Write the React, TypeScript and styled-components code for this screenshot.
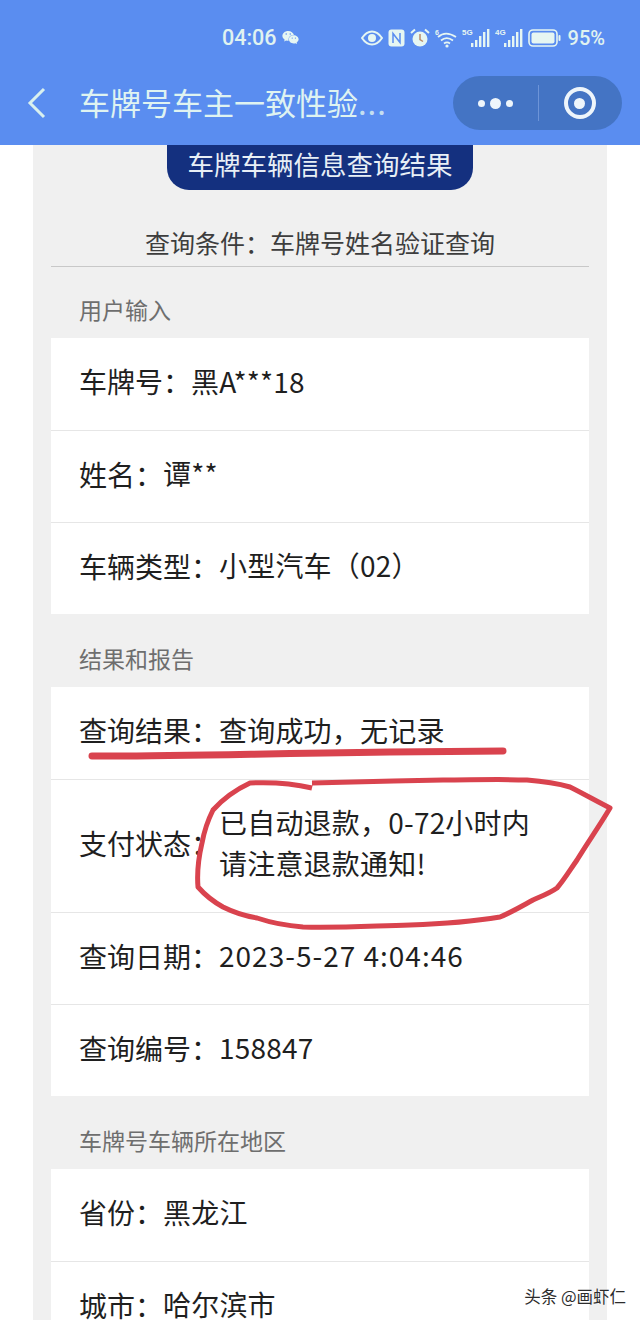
import React from 'react';
import { FaWeixin } from 'react-icons/fa';
import styled, { createGlobalStyle } from 'styled-components';

const GlobalStyle = createGlobalStyle`
  html, body {
    margin: 0;
    padding: 0;
    background: #fff;
  }
  body {
    font-family: "Liberation Sans", "Noto Sans CJK SC", sans-serif;
  }
`;

// full-width punctuation
const COLON = '\uFF1A';
const COMMA = '\uFF0C';
const OPEN = '\uFF08';
const CLOSE = '\uFF09';

interface RowData {
  label: string;
  value: React.ReactNode;
  tall?: boolean;
  spaced?: boolean;
}

interface SectionData {
  title: string;
  rows: RowData[];
}

const sections: SectionData[] = [
  {
    title: '用户输入',
    rows: [
      { label: `车牌号${COLON}`, value: '黑A***18' },
      { label: `姓名${COLON}`, value: '谭**' },
      { label: `车辆类型${COLON}`, value: `小型汽车${OPEN}02${CLOSE}` },
    ],
  },
  {
    title: '结果和报告',
    rows: [
      { label: `查询结果${COLON}`, value: `查询成功${COMMA}无记录` },
      {
        label: `支付状态${COLON}`,
        value: (
          <>
            已自动退款{COMMA}0-72小时内
            <br />
            请注意退款通知!
          </>
        ),
        tall: true,
      },
      { label: `查询日期${COLON}`, value: '2023-5-27 4:04:46', spaced: true },
      { label: `查询编号${COLON}`, value: '158847' },
    ],
  },
  {
    title: '车牌号车辆所在地区',
    rows: [
      { label: `省份${COLON}`, value: '黑龙江' },
      { label: `城市${COLON}`, value: '哈尔滨市' },
    ],
  },
];

const SignalIcon = ({ tag }: { tag: string }) => (
  <svg width="28" height="22" viewBox="0 0 28 22">
    <text x="0" y="8" fontSize="8" fontWeight="700" fill="#e6f6f2" fontFamily="Liberation Sans">
      {tag}
    </text>
    <g fill="#e6f6f2">
      <rect x="9" y="16" width="2.4" height="4" />
      <rect x="13" y="13" width="2.4" height="7" />
      <rect x="17" y="9" width="2.4" height="11" />
      <rect x="21" y="5" width="2.4" height="15" />
      <rect x="25" y="2" width="2.4" height="18" />
    </g>
  </svg>
);

const StatusIcons = () => (
  <IconRow>
    <svg width="22" height="16" viewBox="0 0 22 16">
      <path d="M1 8c3-4.500 6.500-6.500 10-6.500S18 3.500 21 8c-3 4.500-6.500 6.500-10 6.500S4 12.500 1 8z" fill="none" stroke="#e6f6f2" strokeWidth="2" />
      <circle cx="11" cy="8" r="4" fill="#e6f6f2" />
    </svg>
    <svg width="17" height="18" viewBox="0 0 17 18">
      <rect x="0.500" y="0.500" width="16" height="17" rx="3" fill="#e6f6f2" />
      <path d="M5 14V4.500l7 9V4" fill="none" stroke="#5a8df0" strokeWidth="1.500" />
    </svg>
    <svg width="20" height="20" viewBox="0 0 20 20">
      <circle cx="10" cy="11" r="7.500" fill="#e6f6f2" />
      <path d="M10 6v5.500l3 2" fill="none" stroke="#b98b6a" strokeWidth="1.500" />
      <path d="M1 5l4-3.500M19 5l-4-3.500" stroke="#e6f6f2" strokeWidth="2" />
    </svg>
    <svg width="22" height="20" viewBox="0 0 22 20">
      <text x="0" y="7" fontSize="7" fontWeight="700" fill="#e6f6f2" fontFamily="Liberation Sans">6</text>
      <path d="M3 9c5-4.500 11-4.500 18 0M6 12.500c3.500-3 8-3 12 0M9 15.500c2-1.500 4-1.500 6 0" fill="none" stroke="#e6f6f2" strokeWidth="1.800" />
      <circle cx="12" cy="18" r="1.600" fill="#e6f6f2" />
    </svg>
    <SignalIcon tag="5G" />
    <SignalIcon tag="4G" />
    <svg width="33" height="18" viewBox="0 0 33 18">
      <rect x="1" y="1" width="28" height="16" rx="4" fill="none" stroke="#e6f6f2" strokeWidth="1.600" />
      <rect x="3.500" y="3.500" width="23" height="11" rx="2" fill="#e6f6f2" />
      <rect x="30.500" y="6" width="2" height="6" rx="1" fill="#e6f6f2" />
    </svg>
  </IconRow>
);

const App = () => {
  return (
    <Page>
      <GlobalStyle />
      <Header>
        <StatusBar>
          <Clock>04:06</Clock>
          <ChatIcon />
          <StatusRight>
            <StatusIcons />
            <BatteryText>95%</BatteryText>
          </StatusRight>
        </StatusBar>
        <NavBar>
          <BackIcon width="20" height="32" viewBox="0 0 20 32">
            <path d="M17 2L3 16l14 14" fill="none" stroke="#d9f0ee" strokeWidth="3" />
          </BackIcon>
          <NavTitle>
            车牌号车主一致性验<Dots>...</Dots>
          </NavTitle>
          <Capsule>
            <CapsulePart>
              <MoreDots>
                <Dot size={7} />
                <Dot size={11} />
                <Dot size={7} />
              </MoreDots>
            </CapsulePart>
            <CapsulePart>
              <TargetRing />
            </CapsulePart>
          </Capsule>
        </NavBar>
      </Header>

      <Panel>
        <PillWrap>
          <Pill>车牌车辆信息查询结果</Pill>
        </PillWrap>
        <Condition>查询条件{COLON}车牌号姓名验证查询</Condition>
        {sections.map((section) => (
          <section key={section.title}>
            <SectionTitle>{section.title}</SectionTitle>
            <Card>
              {section.rows.map((row) => (
                <Row key={row.label} $tall={row.tall}>
                  <RowLabel>{row.label}</RowLabel>
                  <RowValue $spaced={row.spaced}>{row.value}</RowValue>
                </Row>
              ))}
            </Card>
          </section>
        ))}
      </Panel>

      <Scribble viewBox="0 0 640 1320">
        <path
          d="M92 756C180 757 300 752 503 751"
          fill="none"
          stroke="#d9434e"
          strokeWidth="7"
          strokeLinecap="round"
        />
        <path
          d="M312 788C295 784 270 782 250 783C235 790 222 800 213 810C208 820 204 832 202 843C198 860 197 875 198 887C205 895 214 902 223 907C235 913 245 916 257 918C275 924 290 926 303 927C340 928 370 926 410 925C440 924 470 922 500 917C512 912 522 906 533 900C542 896 550 893 557 888C564 880 570 870 577 860C588 842 600 825 610 808C598 802 584 794 570 787C556 783 540 781 527 780C500 779 470 780 443 780C400 781 350 782 312 783"
          fill="none"
          stroke="#d9434e"
          strokeWidth="5"
          strokeLinejoin="round"
        />
      </Scribble>
      <Watermark>头条 @画虾仁</Watermark>
    </Page>
  );
};

export default App;

const Page = styled.div`
  position: relative;
  width: 640px;
  height: 1320px;
  overflow: hidden;
  background: #fff;
`;

const Header = styled.header`
  height: 145px;
  background: #5a8df0;
  color: #e0f3f0;
`;

const StatusBar = styled.div`
  height: 75px;
  padding: 0 35px 0 222px;
  box-sizing: border-box;
  display: flex;
  align-items: center;
`;

const Clock = styled.span`
  font-size: 21.500px;
  font-weight: 500;
  font-family: Roboto, sans-serif;
`;

const ChatIcon = styled(FaWeixin)`
  margin-left: 5px;
  font-size: 17px;
  color: #e6f6f2;
`;

const StatusRight = styled.div`
  margin-left: auto;
  display: flex;
  align-items: center;
  gap: 7px;
`;

const IconRow = styled.div`
  display: flex;
  align-items: center;
  gap: 5px;
`;

const BatteryText = styled.span`
  font-size: 20px;
  font-weight: 500;
  font-family: Roboto, sans-serif;
`;

const NavBar = styled.div`
  height: 70px;
  padding: 0 18px 0 27px;
  display: flex;
  align-items: flex-start;
`;

const BackIcon = styled.svg`
  flex: none;
  margin-top: 12px;
`;

const NavTitle = styled.h1`
  margin: 6px 0 0 32px;
  font-size: 31px;
  line-height: 42px;
  font-weight: 400;
  color: #dff3f1;
  font-family: "Noto Sans CJK SC", sans-serif;
  white-space: nowrap;
`;

const Dots = styled.span`
  opacity: 0.8;
  letter-spacing: 1px;
`;

const Capsule = styled.div`
  margin-left: auto;
  margin-top: 1px;
  width: 169px;
  height: 54px;
  border-radius: 27px;
  background: #4474c4;
  display: flex;
  align-items: center;
`;

const CapsulePart = styled.div`
  flex: 1;
  height: 100%;
  display: flex;
  align-items: center;
  justify-content: center;

  & + & {
    position: relative;
    &::before {
      content: '';
      position: absolute;
      left: 0;
      top: 9px;
      bottom: 9px;
      width: 1px;
      background: #6d94d8;
    }
  }
`;

const MoreDots = styled.div`
  display: flex;
  align-items: center;
  gap: 5px;
`;

const Dot = styled.i<{ size: number }>`
  width: ${(p) => p.size}px;
  height: ${(p) => p.size}px;
  border-radius: 50%;
  background: #eef5fb;
`;

const TargetRing = styled.div`
  width: 32px;
  height: 32px;
  box-sizing: border-box;
  border: 4px solid #eef5fb;
  border-radius: 50%;
  display: flex;
  align-items: center;
  justify-content: center;

  &::after {
    content: '';
    width: 11px;
    height: 11px;
    border-radius: 50%;
    background: #eef5fb;
  }
`;

const Panel = styled.main`
  margin: 0 33px;
  padding: 0 18px;
  background: #f0f0f0;
  font-family: "Noto Sans CJK SC", sans-serif;
  min-height: 1175px;
`;

const PillWrap = styled.div`
  display: flex;
  justify-content: center;
`;

const Pill = styled.div`
  width: 306px;
  height: 45px;
  border-radius: 0 0 22px 22px;
  background: #14307f;
  color: #e8eff6;
  font-size: 26.500px;
  line-height: 37px;
  text-align: center;
  white-space: nowrap;
`;

const Condition = styled.div`
  margin-top: 32px;
  height: 44px;
  border-bottom: 1px solid #c8c8c8;
  color: #3d3d3d;
  font-size: 25px;
  line-height: 40px;
  text-align: center;
`;

const SectionTitle = styled.div`
  height: 71px;
  padding: 22px 0 0 28px;
  box-sizing: border-box;
  color: #6e6e6e;
  font-size: 23px;
  line-height: 40px;
`;

const Card = styled.div`
  background: #fff;
  margin-bottom: 2px;
`;

const Row = styled.div<{ $tall?: boolean }>`
  height: ${(p) => (p.$tall ? '133px' : '92px')};
  box-sizing: border-box;
  padding: 0 0 6px 28px;
  display: flex;
  align-items: center;
  border-top: 1px solid #e6e6e6;
  color: #1f1f1f;
  font-size: 28px;

  &:first-child {
    border-top: none;
  }
`;

const RowLabel = styled.span`
  white-space: nowrap;
`;

const RowValue = styled.span<{ $spaced?: boolean }>`
  line-height: 41px;
  white-space: nowrap;
  letter-spacing: ${(p) => (p.$spaced ? '1px' : '0.2px')};
`;

const Scribble = styled.svg`
  position: absolute;
  left: 0;
  top: 0;
  width: 640px;
  height: 1320px;
  pointer-events: none;
`;

const Watermark = styled.div`
  position: absolute;
  right: 14px;
  bottom: 12px;
  font-family: "Noto Sans CJK SC", sans-serif;
  font-size: 16.500px;
  color: #2c2c2c;
  text-shadow: 0 0 2px #fff;
`;
